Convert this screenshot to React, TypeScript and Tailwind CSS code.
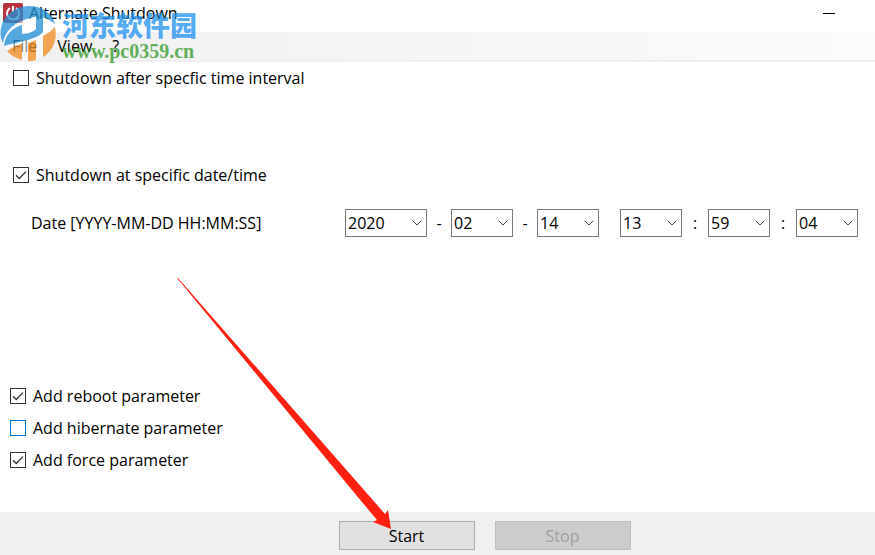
import React, { useState } from "react";
import { ChevronDown } from "lucide-react";

const pad = (n: number) => String(n).padStart(2, "0");
const range = (from: number, to: number) =>
    Array.from({ length: to - from + 1 }, (_, i) => pad(from + i));

interface CheckFieldProps {
    label: string;
    initial?: boolean;
    hot?: boolean;
}

function CheckField({ label, initial = false, hot = false }: CheckFieldProps) {
    const [checked, setChecked] = useState(initial);

    return (
        <label className="flex w-fit h-8 items-center gap-[7px]">
            <span className="grid w-4 h-4">
                <input
                    type="checkbox"
                    checked={checked}
                    onChange={(e) => setChecked(e.target.checked)}
                    className={`col-start-1 row-start-1 w-4 h-4 appearance-none border bg-white ${hot ? "border-[#0078d7]" : "border-[#333333]"}`}
                />
                {checked && (
                    <svg viewBox="0 0 16 16" className="col-start-1 row-start-1 w-4 h-4 pointer-events-none" fill="none" stroke="#333333" strokeWidth="1.3">
                        <path d="M3 8.2 6.3 11.5 13 4.6" />
                    </svg>
                )}
            </span>
            <span>{label}</span>
        </label>
    );
}

interface DropFieldProps {
    label: string;
    initial: string;
    options: string[];
    wide?: boolean;
}

function DropField({ label, initial, options, wide = false }: DropFieldProps) {
    const [value, setValue] = useState(initial);

    return (
        <span className={`grid h-7 ${wide ? "w-[82px]" : "w-[62px]"}`}>
            <select
                aria-label={label}
                value={value}
                onChange={(e) => setValue(e.target.value)}
                className="col-start-1 row-start-1 w-full h-7 appearance-none border border-[#7a7a7a] bg-white pl-0.5 leading-6"
            >
                {options.map((o) => (
                    <option key={o}>{o}</option>
                ))}
            </select>
            <ChevronDown
                className="col-start-1 row-start-1 justify-self-end self-center mr-0.5 w-4 h-4 text-[#444444] pointer-events-none"
                strokeWidth={1.5}
            />
        </span>
    );
}

function AppIcon() {
    return (
        <svg viewBox="0 0 20 20" className="w-5 h-5" fill="none">
            <rect width="20" height="20" rx="2" fill="#b8323f" />
            <path d="M7 5.2A6 6 0 1 0 13 5.2" stroke="#ffffff" strokeWidth="2" />
            <path d="M10 3v6" stroke="#ffffff" strokeWidth="2" />
            <circle cx="14.5" cy="15" r="1.5" fill="#ffffff" />
        </svg>
    );
}

function Watermark() {
    return (
        <div className="absolute left-0 top-1.5 flex items-start gap-1.5 opacity-75 pointer-events-none">
            <svg viewBox="0 6 56 56" className="w-14 h-14" fill="none">
                <circle cx="28" cy="34" r="27" fill="#ffffff" fillOpacity="0.7" />
                <path d="M1 38C-2 20 12 6 29 6C42 6 52 13 55 24C47 17 39 15 30 18C15 22 5 30 3 43Z" fill="#1f8fd6" />
                <path d="M4 46C5 35 12 28 22 25V34C29 34 34 31 36 29V17L43 14V32C36 40 24 40 4 46Z" fill="#1f8fd6" />
                <path d="M7 51C13 47 18 45 22 44V60C15 58 10 55 7 51Z" fill="#f28c1e" />
                <path d="M28 43C31 42 34 41 36 40V60C33 61 30 61 28 61Z" fill="#f28c1e" />
                <path d="M43 36C49 33 53 29 55 27C58 40 52 52 43 57Z" fill="#f28c1e" />
            </svg>
            <div className="flex flex-col pt-[3px]">
                <span className="font-['Noto_Sans_CJK_SC',sans-serif] text-[27px] leading-8 font-black text-[#2090f0]">河东软件园</span>
                <span className="font-['Liberation_Serif',serif] text-[20px] leading-5 font-bold text-[#2f9a26]">www.pc0359.cn</span>
            </div>
        </div>
    );
}

export default function App() {
    return (
        <div className="relative flex flex-col min-h-screen overflow-hidden bg-white text-black text-base leading-6 font-['Open_Sans',sans-serif]">
            <header className="flex h-8 items-center pl-[3px] pr-[23px] pb-1.5">
                <AppIcon />
                <h1 className="ml-1.5">Alternate Shutdown</h1>
                <button aria-label="Minimize" className="ml-auto flex w-[46px] h-6 items-center justify-center">
                    <span className="w-3 h-px bg-black" />
                </button>
            </header>

            <nav className="flex h-[30px] items-center gap-5 border-b-2 border-[#f0f0f0] bg-linear-to-r from-[#f0f0f0] to-[#fbfbfb] pl-3">
                <button>File</button>
                <button>View</button>
                <button>?</button>
            </nav>

            <main className="flex flex-1 flex-col">
                <section className="pl-[13px]">
                    <CheckField label="Shutdown after specfic time interval" />
                </section>

                <section className="mt-[65px]">
                    <div className="pl-[13px]">
                        <CheckField label="Shutdown at specific date/time" initial />
                    </div>
                    <div className="mt-[18px] flex items-center justify-between pl-[31px] pr-[17px]">
                        <span>Date [YYYY-MM-DD HH:MM:SS]</span>
                        <div className="flex items-center text-center">
                            <DropField label="Year" initial="2020" options={range(2020, 2030)} wide />
                            <span className="w-6">-</span>
                            <DropField label="Month" initial="02" options={range(1, 12)} />
                            <span className="w-6">-</span>
                            <DropField label="Day" initial="14" options={range(1, 31)} />
                            <span className="w-[21px]" />
                            <DropField label="Hour" initial="13" options={range(0, 23)} />
                            <span className="w-[26px]">:</span>
                            <DropField label="Minute" initial="59" options={range(0, 59)} />
                            <span className="w-[26px]">:</span>
                            <DropField label="Second" initial="04" options={range(0, 59)} />
                        </div>
                    </div>
                </section>

                <section className="mt-auto pl-2.5 pb-9">
                    <CheckField label="Add reboot parameter" initial />
                    <CheckField label="Add hibernate parameter" hot />
                    <CheckField label="Add force parameter" initial />
                </section>
            </main>

            <footer className="flex justify-center gap-5 bg-[#f0f0f0] pl-[94px] pt-[9px] pb-[5px]">
                <button className="w-[136px] h-[29px] border border-[#adadad] bg-[#e1e1e1]">Start</button>
                <button disabled className="w-[136px] h-[29px] border border-[#bfbfbf] bg-[#cccccc] text-[#a0a0a0]">Stop</button>
            </footer>

            {/* Pointer to the Start button */}
            <svg viewBox="0 0 215 252" className="absolute left-[177px] top-[278px] w-[215px] h-[252px] pointer-events-none">
                <path d="M0 0 1 0 187 212 208 236 211 232 214 251 196 244 200 242 175 212Z" fill="#ff2012" />
            </svg>

            <Watermark />
        </div>
    );
}
